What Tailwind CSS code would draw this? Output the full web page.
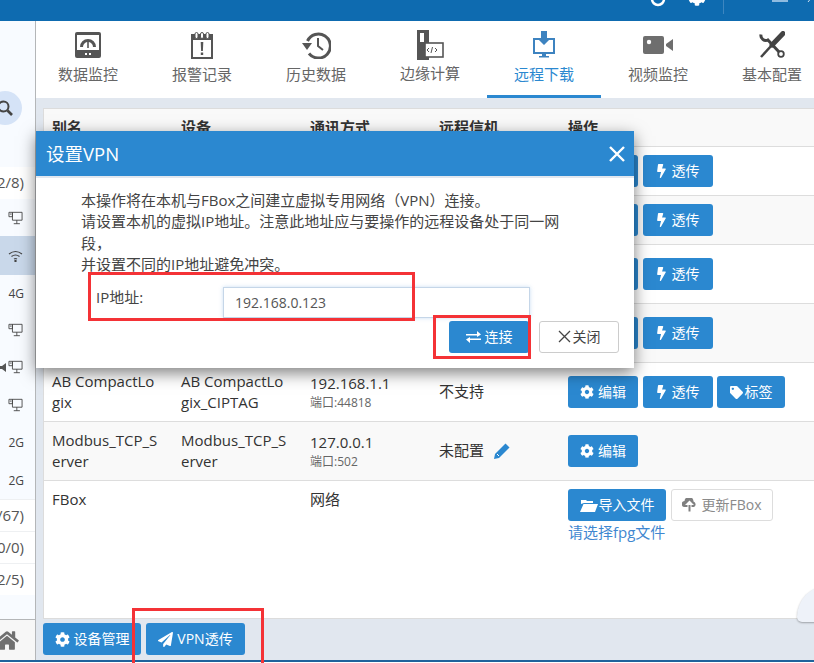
<!DOCTYPE html>
<html lang="zh-CN">
<head>
  <meta charset="UTF-8">
  <title>设置VPN</title>
  <script src="https://cdn.jsdelivr.net/npm/@tailwindcss/browser@4"></script>
</head>
<body class="w-[814px] h-[663px] overflow-hidden bg-white text-[15px] leading-[21.43px] text-[#333] [&_button]:text-[14px] font-['Open_Sans','Noto_Sans_CJK_SC',sans-serif]">
  <!-- shared icons -->
  <svg class="hidden">
    <symbol id="i-cog" viewBox="0 0 512 512"><path d="M487.4 315.7l-42.6-24.6c4.3-23.2 4.3-47 0-70.2l42.6-24.6c4.9-2.8 7.1-8.6 5.5-14-11.1-35.6-30-67.8-54.7-94.6-3.8-4.1-10-5.1-14.8-2.3L380.8 110c-17.9-15.4-38.5-27.3-60.8-35.1V25.8c0-5.6-3.9-10.5-9.4-11.7-36.7-8.2-74.3-7.8-109.2 0-5.5 1.2-9.4 6.1-9.4 11.7V75c-22.2 7.9-42.8 19.8-60.8 35.1L88.7 85.5c-4.9-2.8-11-1.9-14.8 2.3-24.7 26.7-43.6 58.9-54.7 94.6-1.7 5.4.6 11.2 5.5 14L67.3 221c-4.3 23.2-4.3 47 0 70.2l-42.6 24.6c-4.9 2.8-7.1 8.6-5.5 14 11.1 35.6 30 67.8 54.7 94.6 3.8 4.1 10 5.1 14.8 2.3l42.6-24.6c17.9 15.4 38.5 27.3 60.8 35.1v49.2c0 5.6 3.9 10.5 9.4 11.7 36.7 8.2 74.3 7.8 109.2 0 5.5-1.2 9.4-6.1 9.4-11.7v-49.2c22.2-7.9 42.8-19.8 60.8-35.1l42.6 24.6c4.9 2.8 11 1.9 14.8-2.3 24.7-26.7 43.6-58.9 54.7-94.6 1.5-5.5-.7-11.3-5.6-14.1zM256 336c-44.1 0-80-35.9-80-80s35.9-80 80-80 80 35.9 80 80-35.9 80-80 80z"/></symbol>
    <symbol id="i-bolt" viewBox="0 0 320 512"><path d="M296 160H180.6l42.6-129.8C227.2 15 215.7 0 200 0H56C44 0 33.8 8.9 32.2 20.8l-32 240C-1.7 275.2 9.5 288 24 288h118.7L96.6 482.5c-3.6 15.2 8 29.5 23.3 29.5 8.4 0 16.4-4.4 20.8-12l176-304c9.3-15.9-2.2-36-20.7-36z"/></symbol>
    <symbol id="i-tag" viewBox="0 0 512 512"><path d="M0 252.118V48C0 21.49 21.49 0 48 0h204.118a48 48 0 0 1 33.941 14.059l211.882 211.882c18.745 18.745 18.745 49.137 0 67.882L293.823 497.941c-18.745 18.745-49.137 18.745-67.882 0L14.059 286.059A48 48 0 0 1 0 252.118zM112 64c-26.51 0-48 21.49-48 48s21.49 48 48 48 48-21.49 48-48-21.49-48-48-48z"/></symbol>
    <symbol id="i-monitor" viewBox="0 0 16 16"><path fill="none" stroke="#444" d="M4.5 1.5h11v9h-11zM.5 1.5h4v5h-4zM9.5 10.5v4M6 14.5h7M1.5 3.5h2"/></symbol>
  </svg>

  <div class="h-[21px] bg-[#0e6bb0] relative">
    <svg class="absolute left-[650px] top-[-9px] w-[16px] h-[16px]" viewBox="0 0 16 16" fill="none" stroke="#fff" stroke-width="2.5"><path d="M2 8a6 6 0 0 0 12 0"/></svg>
    <svg class="absolute left-[688px] top-[-12px] w-[18px] h-[18px]" fill="#fff"><use href="#i-cog"/></svg>
    <div class="absolute left-[723px] top-0 w-px h-[14px] bg-[#3d86c0]"></div>
    <div class="absolute left-[772px] top-0 w-[16px] h-[2px] bg-[#8fbbe0]"></div>
    <svg class="absolute left-[807px] top-[-3px] w-[6px] h-[6px]" viewBox="0 0 6 6" fill="none" stroke="#cfe2f3"><path d="M1 5l4-5"/></svg>
  </div>

  <div class="flex h-[641px] border-b-2 border-[#1f639c]">
    <!-- sidebar, clipped on the left -->
    <aside class="w-[36px] shrink-0 flex flex-col bg-[#f8fbff] border-r border-[#b4b6b8] text-[#444] overflow-hidden">
      <div class="h-[146px] shrink-0 pt-[70px]">
        <div class="-ml-[12px] w-[34px] h-[34px] rounded-full bg-[#d5e3f7] flex items-center justify-start pl-[9px]">
          <svg class="w-[16px] h-[16px]" viewBox="0 0 16 16" fill="none" stroke="#444" stroke-width="2"><circle cx="6.5" cy="6.5" r="5"/><path stroke-width="2.6" d="M10.5 10.5l4.5 4.5"/></svg>
        </div>
      </div>
      <div class="h-[32px] shrink-0 bg-white flex justify-end items-center pr-[11px] whitespace-nowrap text-[#555]">(2/8)</div>
      <div class="h-[37px] shrink-0 flex justify-end items-center pr-[12px]"><svg class="w-[15px] h-[14px]"><use href="#i-monitor"/></svg></div>
      <div class="h-[39px] shrink-0 bg-[#c9d8ea] flex justify-end items-center pr-[12px]">
        <svg class="w-[15px] h-[12px]" viewBox="0 0 15 12" fill="none" stroke="#444" stroke-width="1.2"><path d="M1 4q6.5-5 13 0M3.5 6.5q4-3 8 0M6 9q1.5-1 3 0"/><circle cx="7.5" cy="11" r=".6" fill="#444"/></svg>
      </div>
      <div class="h-[37px] shrink-0 flex justify-end items-center pr-[11px] text-[12px]">4G</div>
      <div class="h-[36px] shrink-0 flex justify-end items-center pr-[12px]"><svg class="w-[15px] h-[14px]"><use href="#i-monitor"/></svg></div>
      <div class="h-[38px] shrink-0 flex justify-end items-center pr-[12px] gap-[2px]">
        <svg class="w-[6px] h-[9px] shrink-0" viewBox="0 0 6 9" fill="#555"><path d="M0 3h2l4-3v9L2 6H0z"/></svg>
        <svg class="w-[15px] h-[14px] shrink-0"><use href="#i-monitor"/></svg>
      </div>
      <div class="h-[38px] shrink-0 flex justify-end items-center pr-[12px]"><svg class="w-[15px] h-[14px]"><use href="#i-monitor"/></svg></div>
      <div class="h-[38px] shrink-0 flex justify-end items-center pr-[11px] text-[12px]">2G</div>
      <div class="h-[37px] shrink-0 flex justify-end items-center pr-[11px] text-[12px]">2G</div>
      <div class="h-[32px] shrink-0 bg-white border-t border-[#eef0f2] flex justify-end items-center pr-[11px] whitespace-nowrap text-[#555]">(12/67)</div>
      <div class="h-[32px] shrink-0 bg-white border-t border-[#eef0f2] flex justify-end items-center pr-[11px] whitespace-nowrap text-[#555]">(0/0)</div>
      <div class="h-[32px] shrink-0 bg-white border-t border-[#eef0f2] flex justify-end items-center pr-[11px] whitespace-nowrap text-[#555]">(2/5)</div>
      <div class="h-[24px] shrink-0"></div>
      <div class="flex-1 border-t border-[#b4b6b8] bg-[#f7f7f7] relative">
        <svg class="absolute left-[-5px] top-[10px] w-[24px] h-[21px]" viewBox="0 0 576 512" fill="#707070"><path d="M280.37 148.26L96 300.11V464a16 16 0 0 0 16 16l112.06-.29a16 16 0 0 0 15.92-16V368a16 16 0 0 1 16-16h64a16 16 0 0 1 16 16v95.64a16 16 0 0 0 16 16.05L464 480a16 16 0 0 0 16-16V300L295.67 148.26a12.19 12.19 0 0 0-15.3 0zM571.6 251.47L488 182.56V44.05a12 12 0 0 0-12-12h-56a12 12 0 0 0-12 12v72.61L318.47 43a48 48 0 0 0-61 0L4.34 251.47a12 12 0 0 0-1.6 16.9l25.5 31A12 12 0 0 0 45.15 301l235.22-193.74a12.19 12.19 0 0 1 15.3 0L530.9 301a12 12 0 0 0 16.9-1.6l25.5-31a12 12 0 0 0-1.7-16.93z"/></svg>
      </div>
    </aside>

    <main class="flex-1 min-w-0 flex flex-col bg-[#e1e7ef] overflow-hidden">
      <!-- tabs -->
      <nav class="h-[77px] shrink-0 bg-white flex -ml-[5px] text-[#666]">
        <div class="w-[114px] shrink-0 flex flex-col items-center pt-[10px]">
          <svg class="w-[28px] h-[28px]" viewBox="0 0 28 28"><rect x="1" y="1" width="26" height="26" rx="2" fill="#555"/><rect x="3" y="4" width="22" height="15" fill="#fff"/><path d="M7.500 16a6.500 6.500 0 0 1 13 0" fill="none" stroke="#555" stroke-width="3"/><path d="M14 11v6" stroke="#555" stroke-width="1.600"/><rect x="11" y="22" width="2" height="2" fill="#fff"/><rect x="15" y="22" width="2" height="2" fill="#fff"/></svg>
          <span class="mt-[5px]">数据监控</span>
        </div>
        <div class="w-[114px] shrink-0 flex flex-col items-center pt-[10px]">
          <svg class="w-[28px] h-[28px]" viewBox="0 0 28 28"><rect x="4" y="4" width="20" height="23" fill="#fff" stroke="#555" stroke-width="2"/><rect x="4" y="4" width="20" height="5" fill="#555"/><rect x="7" y="1.5" width="3" height="6" rx="1.5" fill="#fff" stroke="#555"/><rect x="12.5" y="1.5" width="3" height="6" rx="1.5" fill="#fff" stroke="#555"/><rect x="18" y="1.5" width="3" height="6" rx="1.5" fill="#fff" stroke="#555"/><path d="M12.7 11h2.6l-.4 9h-1.8zM12.8 21.5h2.4v2.5h-2.4z" fill="#555"/></svg>
          <span class="mt-[5px]">报警记录</span>
        </div>
        <div class="w-[114px] shrink-0 flex flex-col items-center pt-[10px]">
          <svg class="w-[30px] h-[28px]" viewBox="0 0 30 28" fill="none"><path d="M6.5 10A12 12 0 1 1 8 22.5" stroke="#555" stroke-width="3"/><path d="M1 12h10l-5 7z" fill="#555"/><path d="M17 7v8l5 4" stroke="#555" stroke-width="2"/></svg>
          <span class="mt-[5px]">历史数据</span>
        </div>
        <div class="w-[114px] shrink-0 flex flex-col items-center pt-[10px]">
          <svg class="w-[28px] h-[30px] -mb-[2px] -mt-[1px]" viewBox="0 0 28 30"><rect x="1" y="0" width="12" height="30" fill="#555"/><rect x="4" y="3" width="4" height="9" fill="#fff"/><rect x="9" y="13" width="18" height="14" fill="#fff" stroke="#555" stroke-width="1.6"/><path d="M13 18l-2 2 2 2M16.5 17l-1.5 6M19 18l2 2-2 2" fill="none" stroke="#555"/></svg>
          <span class="mt-[5px]">边缘计算</span>
        </div>
        <div class="w-[114px] shrink-0 flex flex-col items-center pt-[10px] text-[#2b88d0] border-b-[3px] border-[#2b88d0]">
          <svg class="w-[22px] h-[28px]" viewBox="0 0 22 28"><path d="M7 8H1v14h20V8h-6" fill="none" stroke="#3d83c0" stroke-width="2"/><path d="M8 0h6v7h4l-7 7-7-7h4z" fill="#3d83c0"/><path d="M9 23h4v2h3v1.500H6V25h3z" fill="#3d83c0"/></svg>
          <span class="mt-[5px]">远程下载</span>
        </div>
        <div class="w-[114px] shrink-0 flex flex-col items-center pt-[10px]">
          <svg class="w-[30px] h-[28px]" viewBox="0 0 30 28"><rect x="0" y="5" width="21" height="18" rx="2" fill="#6e6e6e"/><circle cx="6" cy="11" r="2.200" fill="#fff"/><path d="M23 13l7-5v12l-7-5z" fill="#6e6e6e"/></svg>
          <span class="mt-[5px]">视频监控</span>
        </div>
        <div class="w-[114px] shrink-0 flex flex-col items-center pt-[10px]">
          <svg class="w-[26px] h-[28px]" viewBox="0 0 26 28" fill="none">
            <path d="M2 3.500a5 5 0 0 0 7 5.500" stroke="#444" stroke-width="3"/>
            <path d="M8 8l13 14" stroke="#444" stroke-width="3"/>
            <circle cx="22" cy="23" r="2.800" fill="#fff" stroke="#444" stroke-width="1.800"/>
            <path d="M2 26L13 14" stroke="#444" stroke-width="2.500"/>
            <path d="M13 14L24 2.500" stroke="#444" stroke-width="5" stroke-linecap="round"/>
          </svg>
          <span class="mt-[5px]">基本配置</span>
        </div>
      </nav>

      <!-- device table -->
      <section class="mt-[10px] ml-[7px] -mr-[10px] h-[511px] shrink-0 bg-white border border-[#dcdcdc]">
        <div class="h-[38px] bg-[#f9f9f9] border-b border-[#ddd] grid grid-cols-[129px_129px_129px_129px_1fr] font-bold pt-[8px]">
          <div class="px-2">别名</div><div class="px-2">设备</div><div class="px-2">通讯方式</div><div class="px-2">远程信机</div><div class="px-2">操作</div>
        </div>
        <div class="h-[49px] border-b border-[#ddd] pl-[524px] flex items-center gap-[5px]">
          <button class="w-[70px] h-[32px] rounded-[3px] bg-[#2b88d0] text-white flex items-center justify-center gap-1"><svg class="w-[14px] h-[14px] fill-white"><use href="#i-cog"/></svg>编辑</button>
          <button class="w-[70px] h-[32px] rounded-[3px] bg-[#2b88d0] text-white flex items-center justify-center gap-[6px]"><svg class="w-[9px] h-[14px] fill-white"><use href="#i-bolt"/></svg>透传</button>
        </div>
        <div class="h-[49px] bg-[#f9f9f9] border-b border-[#ddd] pl-[524px] flex items-center gap-[5px]">
          <button class="w-[70px] h-[32px] rounded-[3px] bg-[#2b88d0] text-white flex items-center justify-center gap-1"><svg class="w-[14px] h-[14px] fill-white"><use href="#i-cog"/></svg>编辑</button>
          <button class="w-[70px] h-[32px] rounded-[3px] bg-[#2b88d0] text-white flex items-center justify-center gap-[6px]"><svg class="w-[9px] h-[14px] fill-white"><use href="#i-bolt"/></svg>透传</button>
        </div>
        <div class="h-[59px] border-b border-[#ddd] pl-[524px] flex items-center gap-[5px]">
          <button class="w-[70px] h-[32px] rounded-[3px] bg-[#2b88d0] text-white flex items-center justify-center gap-1"><svg class="w-[14px] h-[14px] fill-white"><use href="#i-cog"/></svg>编辑</button>
          <button class="w-[70px] h-[32px] rounded-[3px] bg-[#2b88d0] text-white flex items-center justify-center gap-[6px]"><svg class="w-[9px] h-[14px] fill-white"><use href="#i-bolt"/></svg>透传</button>
        </div>
        <div class="h-[59px] bg-[#f9f9f9] border-b border-[#ddd] pl-[524px] flex items-center gap-[5px]">
          <button class="w-[70px] h-[32px] rounded-[3px] bg-[#2b88d0] text-white flex items-center justify-center gap-1"><svg class="w-[14px] h-[14px] fill-white"><use href="#i-cog"/></svg>编辑</button>
          <button class="w-[70px] h-[32px] rounded-[3px] bg-[#2b88d0] text-white flex items-center justify-center gap-[6px]"><svg class="w-[9px] h-[14px] fill-white"><use href="#i-bolt"/></svg>透传</button>
        </div>
        <div class="h-[59px] border-b border-[#ddd] grid grid-cols-[129px_129px_129px_129px_1fr]">
          <div class="px-2 pt-2">AB CompactLo<br>gix</div>
          <div class="px-2 pt-2">AB CompactLo<br>gix_CIPTAG</div>
          <div class="px-2 pt-[10px]">192.168.1.1<div class="text-[12px] leading-[17px] text-[#666]">端口:44818</div></div>
          <div class="px-2 flex items-center">不支持</div>
          <div class="px-2 flex items-center">
            <button class="w-[70px] h-[32px] rounded-[3px] bg-[#2b88d0] text-white flex items-center justify-center gap-1"><svg class="w-[14px] h-[14px] fill-white"><use href="#i-cog"/></svg>编辑</button>
            <button class="ml-[5px] w-[70px] h-[32px] rounded-[3px] bg-[#2b88d0] text-white flex items-center justify-center gap-[6px]"><svg class="w-[9px] h-[14px] fill-white"><use href="#i-bolt"/></svg>透传</button>
            <button class="ml-[4px] w-[68px] h-[32px] rounded-[3px] bg-[#2b88d0] text-white flex items-center justify-center gap-[2px]"><svg class="w-[13px] h-[13px] fill-white"><use href="#i-tag"/></svg>标签</button>
          </div>
        </div>
        <div class="h-[59px] bg-[#f9f9f9] border-b border-[#ddd] grid grid-cols-[129px_129px_129px_129px_1fr]">
          <div class="px-2 pt-2">Modbus_TCP_S<br>erver</div>
          <div class="px-2 pt-2">Modbus_TCP_S<br>erver</div>
          <div class="px-2 pt-[10px]">127.0.0.1<div class="text-[12px] leading-[17px] text-[#666]">端口:502</div></div>
          <div class="px-2 flex items-center">未配置
            <svg class="ml-[10px] w-[16px] h-[16px]" viewBox="0 0 16 16" fill="#2b88d0"><path d="M11.500 0.500l4 4L5 15l-5 1 1-5z"/><path d="M3 11l2 2" stroke="#fff"/></svg>
          </div>
          <div class="px-2 flex items-center">
            <button class="w-[70px] h-[32px] rounded-[3px] bg-[#2b88d0] text-white flex items-center justify-center gap-1"><svg class="w-[14px] h-[14px] fill-white"><use href="#i-cog"/></svg>编辑</button>
          </div>
        </div>
        <div class="grid grid-cols-[129px_129px_129px_129px_1fr]">
          <div class="px-2 pt-2">FBox</div>
          <div></div>
          <div class="px-2 pt-2">网络</div>
          <div></div>
          <div class="px-2 pt-2">
            <div class="flex">
              <button class="w-[98px] h-[32px] rounded-[3px] bg-[#2b88d0] text-white flex items-center justify-center gap-[1px]">
                <svg class="w-[18px] h-[14px]" viewBox="0 0 18 14" fill="#fff"><path d="M1 6V2h5l1 1h6v2H4zM3.500 6H18l-3 8H0z"/></svg>导入文件</button>
              <button class="ml-[5px] w-[102px] h-[32px] rounded-[3px] border border-[#ddd] bg-white text-[#8a8a8a] flex items-center justify-center gap-1">
                <svg class="w-[15px] h-[14px]" viewBox="0 0 15 14" fill="#808080"><path d="M3 9a3 3 0 0 1-.5-6 4.500 4.500 0 0 1 9 .5A3 3 0 0 1 12 9H9.500V7H12L7.500 2.500 3 7h2.500v2z"/><path d="M6.500 7h2v6.500h-2z"/></svg>更新FBox</button>
            </div>
            <div class="text-[#3f87d0] leading-[22px]">请选择fpg文件</div>
          </div>
        </div>
      </section>

      <div class="pl-[7px] pt-[4px] flex gap-[5px]">
        <button class="w-[98px] h-[32px] rounded-[3px] bg-[#2b88d0] text-white flex items-center justify-center gap-1"><svg class="w-[15px] h-[15px] fill-white"><use href="#i-cog"/></svg>设备管理</button>
        <button class="w-[99px] h-[32px] rounded-[3px] bg-[#2b88d0] text-white flex items-center justify-center gap-1">
          <svg class="w-[15px] h-[15px]" viewBox="0 0 512 512" fill="#fff"><path d="M476 3.200L12.500 270.600c-18.100 10.400-15.800 35.600 2.200 43.200L121 358.400l287.300-253.200c5.500-4.900 13.300 2.600 8.600 8.300L176 407v80.500c0 23.600 28.500 32.900 42.500 15.800L282 426l124.600 52.200c14.200 6 30.400-2.900 33-18.200l72-432C515 7.800 493.300-6.800 476 3.200z"/></svg>VPN透传</button>
      </div>
    </main>
  </div>

  <!-- floating helper at the right edge -->
  <div class="absolute left-[797px] top-[585px] w-[40px] h-[37px] rounded-tl-[32px] rounded-bl-[5px] bg-[#eef2f9] shadow-[0_1px_2px_rgba(0,0,0,.3)]"></div>

  <!-- dialog -->
  <div class="absolute left-[36px] top-[131px] w-[598px] h-[237px] bg-white shadow-[0_5px_15px_rgba(0,0,0,.5)] flex flex-col">
    <div class="h-[47px] shrink-0 bg-[#2b88d0] border-b-2 border-[#e1e7ef] flex items-center justify-between pl-[10px] pr-[9px] text-white">
      <span class="text-[18.5px]">设置VPN</span>
      <svg class="w-[16px] h-[16px]" viewBox="0 0 16 16" stroke="#fff" stroke-width="2.400"><path d="M1 1l14 14M15 1L1 15"/></svg>
    </div>
    <div class="pl-[45px] pr-[70px] pt-[12px] text-[#444]">
      <p>本操作将在本机与FBox之间建立虚拟专用网络（VPN）连接。<br>请设置本机的虚拟IP地址。注意此地址应与要操作的远程设备处于同一网段，<br>并设置不同的IP地址避免冲突。</p>
    </div>
    <div class="flex items-center mt-[11px] pl-[60px]">
      <label class="w-[127px] -mt-[9px] text-[#444]">IP地址:</label>
      <input class="w-[307px] h-[31px] px-[11px] text-[14px] text-[#555] border border-[#c5d6e8] shadow-[0_0_4px_rgba(100,160,220,.35)] outline-none" value="192.168.0.123">
    </div>
    <div class="flex justify-end gap-[10px] pr-[15px] mt-[3px]">
      <button class="w-[80px] h-[32px] rounded-[3px] bg-[#2b88d0] text-white flex items-center justify-center gap-[4px]">
        <svg class="w-[15px] h-[12px]" viewBox="0 0 15 12" fill="#fff"><path d="M0 3h11V0l4 3.500L11 6V4.500H0zM15 7.500H4V6L0 8.500 4 12V9h11z"/></svg>连接</button>
      <button class="w-[80px] h-[32px] rounded-[3px] border border-[#ccc] bg-white text-[#444] flex items-center justify-center gap-[2px]">
        <svg class="w-[13px] h-[13px]" viewBox="0 0 13 13" stroke="#444" stroke-width="1.300"><path d="M1 1l11 11M12 1L1 12"/></svg>关闭</button>
    </div>
  </div>

  <!-- red annotation boxes -->
  <div class="absolute left-[88px] top-[272px] w-[327px] h-[49px] border-[3px] border-[#f43236]"></div>
  <div class="absolute left-[433px] top-[315px] w-[98px] h-[44px] border-[3px] border-[#f43236]"></div>
  <div class="absolute left-[132px] top-[608px] w-[132px] h-[70px] border-[3px] border-[#f43236]"></div>
</body>
</html>
